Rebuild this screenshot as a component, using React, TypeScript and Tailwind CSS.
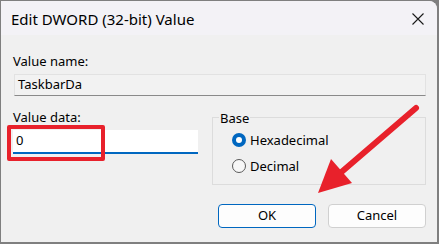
import React from "react";

const font = { fontFamily: '"Segoe UI", "Noto Sans", "Liberation Sans", sans-serif' };

function Radio({ checked, label }: { checked: boolean; label: string }) {
  return (
    <div className="flex items-center h-[26px]">
      {checked ? (
        <div className="w-[14px] h-[14px] rounded-full bg-[#0067c0] flex items-center justify-center">
          <div className="w-[6px] h-[6px] rounded-full bg-white" />
        </div>
      ) : (
        <div className="w-[14px] h-[14px] rounded-full border border-[#5a5a5a] bg-[#f7f7f7]" />
      )}
      <span className="ml-[4px] text-[13px] text-black leading-none">{label}</span>
    </div>
  );
}

export default function App() {
  return (
    <div className="w-[439px] h-[244px] bg-[#7f7f7f] pt-px pl-px pr-[2px] pb-[2px]" style={font}>
      <div className="relative h-full bg-[#f0f0f0] rounded-tr-[8px] flex flex-col overflow-hidden">
        <div className="h-[34px] bg-[#f3f2f6] flex items-center justify-between pl-[10px] pr-[13px] shrink-0">
          <span className="text-[15px] text-black leading-none pt-[2px]">Edit DWORD (32-bit) Value</span>
          <svg width="12" height="12" viewBox="0 0 12 12" className="mt-[2px]">
            <path d="M0.5 0.5 L11.5 11.5 M11.5 0.5 L0.5 11.5" stroke="#1a1a1a" strokeWidth="1.1" />
          </svg>
        </div>
        <div className="flex flex-col pl-[12px] pr-[11px]">
          <div className="mt-[18px] text-[13px] leading-[16px] text-black">Value name:</div>
          <div className="mt-[5px] ml-px h-[22px] bg-[#f2f2f2] border border-[#e2e2e2] border-b-[#8a8a8a] flex items-center pl-[3px] text-[13px] text-black">
            TaskbarDa
          </div>
          <div className="flex mt-[13px]">
            <div className="flex flex-col w-[185px]">
              <div className="text-[13px] leading-[16px] text-black">Value data:</div>
              <div className="mt-[5px] h-[24px] bg-white border-b-2 border-[#0067c0] flex items-center pl-[3px] text-[13px] text-black">
                0
              </div>
            </div>
            <div className="ml-[14px] flex-1 relative mt-[8px] h-[68px] border border-[#dcdcdc] pl-[19px] pt-[9px]">
              <span className="absolute -top-[8px] left-[6px] px-[1px] bg-[#f0f0f0] text-[13px] leading-[16px] text-black">Base</span>
              <Radio checked label="Hexadecimal" />
              <Radio checked={false} label="Decimal" />
            </div>
          </div>
          <div className="flex justify-end gap-[12px] mt-[19px]">
            <button className="w-[98px] h-[24px] rounded-[4px] border border-[#0067c0] bg-[#fdfdfd] text-[13px] text-black">
              OK
            </button>
            <button className="w-[98px] h-[24px] rounded-[4px] border border-[#d0d0d0] bg-[#fdfdfd] text-[13px] text-black">
              Cancel
            </button>
          </div>
        </div>
        <div className="absolute left-[6px] top-[124px] w-[98px] h-[36px] border-[4px] border-[#e8212b] rounded-[2px]" />
        <svg className="absolute left-0 top-0 pointer-events-none" width="437" height="241" viewBox="0 0 437 241">
          <g transform="translate(-1,-1)">
            <line x1="416" y1="108" x2="338" y2="175" stroke="#e8212b" strokeWidth="6" strokeLinecap="round" />
            <polygon points="318,193 331,159 352,183" fill="#e8212b" />
          </g>
        </svg>
      </div>
    </div>
  );
}
